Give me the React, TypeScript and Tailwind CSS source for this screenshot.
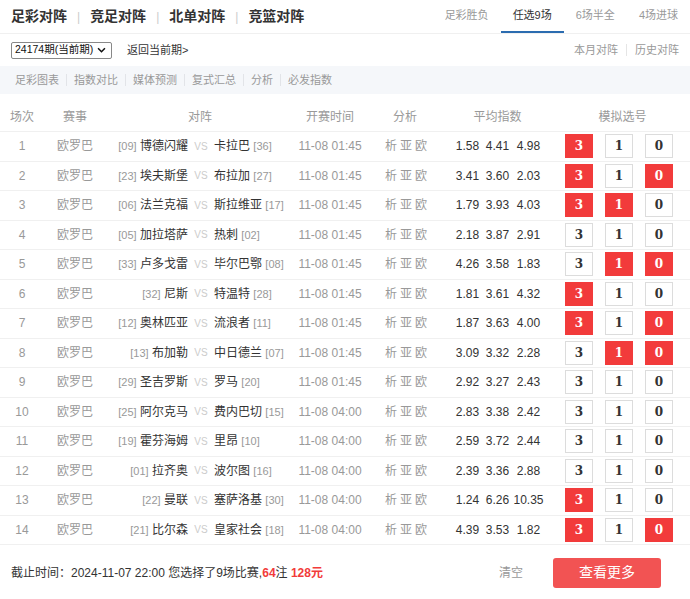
import { Fragment } from 'react';

interface Match {
  no: number;
  league: string;
  homeRank: string;
  home: string;
  away: string;
  awayRank: string;
  time: string;
  odds: [string, string, string];
  picks: [boolean, boolean, boolean];
}

const matches: Match[] = [
  { no: 1, league: '欧罗巴', homeRank: '09', home: '博德闪耀', away: '卡拉巴', awayRank: '36', time: '11-08 01:45', odds: ['1.58', '4.41', '4.98'], picks: [true, false, false] },
  { no: 2, league: '欧罗巴', homeRank: '23', home: '埃夫斯堡', away: '布拉加', awayRank: '27', time: '11-08 01:45', odds: ['3.41', '3.60', '2.03'], picks: [true, false, true] },
  { no: 3, league: '欧罗巴', homeRank: '06', home: '法兰克福', away: '斯拉维亚', awayRank: '17', time: '11-08 01:45', odds: ['1.79', '3.93', '4.03'], picks: [true, true, false] },
  { no: 4, league: '欧罗巴', homeRank: '05', home: '加拉塔萨', away: '热刺', awayRank: '02', time: '11-08 01:45', odds: ['2.18', '3.87', '2.91'], picks: [false, false, false] },
  { no: 5, league: '欧罗巴', homeRank: '33', home: '卢多戈雷', away: '毕尔巴鄂', awayRank: '08', time: '11-08 01:45', odds: ['4.26', '3.58', '1.83'], picks: [false, true, true] },
  { no: 6, league: '欧罗巴', homeRank: '32', home: '尼斯', away: '特温特', awayRank: '28', time: '11-08 01:45', odds: ['1.81', '3.61', '4.32'], picks: [true, false, false] },
  { no: 7, league: '欧罗巴', homeRank: '12', home: '奥林匹亚', away: '流浪者', awayRank: '11', time: '11-08 01:45', odds: ['1.87', '3.63', '4.00'], picks: [true, false, true] },
  { no: 8, league: '欧罗巴', homeRank: '13', home: '布加勒', away: '中日德兰', awayRank: '07', time: '11-08 01:45', odds: ['3.09', '3.32', '2.28'], picks: [false, true, true] },
  { no: 9, league: '欧罗巴', homeRank: '29', home: '圣吉罗斯', away: '罗马', awayRank: '20', time: '11-08 01:45', odds: ['2.92', '3.27', '2.43'], picks: [false, false, false] },
  { no: 10, league: '欧罗巴', homeRank: '25', home: '阿尔克马', away: '费内巴切', awayRank: '15', time: '11-08 04:00', odds: ['2.83', '3.38', '2.42'], picks: [false, false, false] },
  { no: 11, league: '欧罗巴', homeRank: '19', home: '霍芬海姆', away: '里昂', awayRank: '10', time: '11-08 04:00', odds: ['2.59', '3.72', '2.44'], picks: [false, false, false] },
  { no: 12, league: '欧罗巴', homeRank: '01', home: '拉齐奥', away: '波尔图', awayRank: '16', time: '11-08 04:00', odds: ['2.39', '3.36', '2.88'], picks: [false, false, false] },
  { no: 13, league: '欧罗巴', homeRank: '22', home: '曼联', away: '塞萨洛基', awayRank: '30', time: '11-08 04:00', odds: ['1.24', '6.26', '10.35'], picks: [true, false, false] },
  { no: 14, league: '欧罗巴', homeRank: '21', home: '比尔森', away: '皇家社会', awayRank: '18', time: '11-08 04:00', odds: ['4.39', '3.53', '1.82'], picks: [true, false, true] },
];

const titleTabs = ['足彩对阵', '竞足对阵', '北单对阵', '竞篮对阵'];
const playTabs = ['足彩胜负', '任选9场', '6场半全', '4场进球'];
const subNav = ['足彩图表', '指数对比', '媒体预测', '复式汇总', '分析', '必发指数'];

function PickBox({ label, on }: { label: string; on: boolean }) {
  return (
    <div
      className={`w-[28px] h-[24px] flex items-center justify-center text-[12px] font-bold ${
        on ? 'bg-[#f23b3b] text-white' : 'bg-white border border-[#dcdcdc] text-[#333]'
      }`}
      style={{ fontFamily: '"DejaVu Serif", "Liberation Serif", serif' }}
    >
      {label}
    </div>
  );
}

export default function App() {
  return (
    <div
      className="w-[690px] h-[599px] bg-white text-[#333] overflow-hidden"
      style={{ fontFamily: '"Liberation Sans", "Noto Sans CJK SC", sans-serif' }}
    >
      {/* Top title bar */}
      <div className="h-[34px] flex items-center justify-between border-b border-[#f0f0f0]">
        <div className="flex items-center pl-[11px] text-[14px] font-bold text-[#333]">
          {titleTabs.map((t, i) => (
            <Fragment key={t}>
              {i > 0 && <span className="mx-[10px] text-[#ccc] font-normal text-[12px]">|</span>}
              <span>{t}</span>
            </Fragment>
          ))}
        </div>
        <div className="flex items-stretch h-full text-[11px]">
          {playTabs.map((t, i) => (
            <div
              key={t}
              className={`flex items-center px-[12px] border-b-2 ${
                i === 1 ? 'text-[#333] border-[#2b6cb0]' : 'text-[#999] border-transparent'
              }`}
            >
              {t}
            </div>
          ))}
        </div>
      </div>

      {/* Period row */}
      <div className="h-[32px] flex items-center justify-between pl-[11px] pr-[11px]">
        <div className="flex items-center">
          <div className="w-[101px] h-[17px] border border-[#888] rounded-[2px] flex items-center justify-between pl-[3px] pr-[5px] text-[10.5px] text-[#111] whitespace-nowrap">
            <span>24174期(当前期)</span>
            <svg width="9" height="6" viewBox="0 0 10 7" className="shrink-0">
              <path d="M1 1.5 L5 5.5 L9 1.5" fill="none" stroke="#111" strokeWidth="1.8" />
            </svg>
          </div>
          <span className="ml-[15px] text-[11px] text-[#333]">返回当前期&gt;</span>
        </div>
        <div className="flex items-center text-[11px] text-[#999]">
          <span>本月对阵</span>
          <span className="mx-[8px] w-px h-[12px] bg-[#e5e5e5]" />
          <span>历史对阵</span>
        </div>
      </div>

      {/* Sub nav */}
      <div className="h-[28px] bg-[#f5f7fa] flex items-center pl-[15px] text-[11px] text-[#999]">
        {subNav.map((t, i) => (
          <Fragment key={t}>
            {i > 0 && <span className="mx-[7px] w-px h-[12px] bg-[#e2e4e8]" />}
            <span>{t}</span>
          </Fragment>
        ))}
      </div>

      {/* Table */}
      <div className="mt-[8px]">
        <div className="h-[30px] flex items-center text-[12px] text-[#999] border-b border-[#f0f0f0]">
          <div className="w-[44px] text-center">场次</div>
          <div className="w-[62px] text-center">赛事</div>
          <div className="w-[184px] text-center pl-[4px]">对阵</div>
          <div className="w-[80px] text-center">开赛时间</div>
          <div className="w-[70px] text-center">分析</div>
          <div className="w-[115px] text-center">平均指数</div>
          <div className="w-[130px] text-center pl-[5px]">模拟选号</div>
        </div>
        {matches.map((m) => (
          <div key={m.no} className="h-[29.5px] flex items-center text-[12px] border-b border-[#f0f0f0]">
            <div className="w-[44px] text-center text-[#999]">{m.no}</div>
            <div className="w-[62px] text-center text-[#999]">{m.league}</div>
            <div className="w-[184px] flex items-center">
              <div className="w-[82px] text-right whitespace-nowrap">
                <span className="text-[11px] text-[#999]">[{m.homeRank}]</span> <span className="text-[#333]">{m.home}</span>
              </div>
              <div className="w-[26px] text-center text-[10px] text-[#ccc]">VS</div>
              <div className="flex-1 whitespace-nowrap">
                <span className="text-[#333]">{m.away}</span> <span className="text-[11px] text-[#999]">[{m.awayRank}]</span>
              </div>
            </div>
            <div className="w-[80px] text-center text-[#999]">{m.time}</div>
            <div className="w-[70px] text-center text-[#999] tracking-[3px] pl-[5px]">析亚欧</div>
            <div className="w-[115px] flex items-center justify-center text-[#333] pl-[2px]">
              <span className="w-[30px] text-center">{m.odds[0]}</span>
              <span className="w-[30px] text-center">{m.odds[1]}</span>
              <span className="w-[32px] text-center">{m.odds[2]}</span>
            </div>
            <div className="flex items-center gap-[12px] pl-[10px]">
              <PickBox label="3" on={m.picks[0]} />
              <PickBox label="1" on={m.picks[1]} />
              <PickBox label="0" on={m.picks[2]} />
            </div>
          </div>
        ))}
      </div>

      {/* Footer */}
      <div className="h-[56px] flex items-center justify-between pl-[11px] pr-[29px] border-b border-[#f0f0f0]">
        <div className="text-[12px] text-[#333]">
          截止时间：2024-11-07 22:00 您选择了9场比赛,
          <span className="text-[#f23b3b] font-bold">64</span>注{' '}
          <span className="text-[#f23b3b] font-bold">128元</span>
        </div>
        <div className="flex items-center">
          <span className="text-[12px] text-[#999] mr-[30px]">清空</span>
          <div className="w-[108px] h-[30px] rounded-[3px] bg-[#f25353] text-white text-[14px] flex items-center justify-center">
            查看更多
          </div>
        </div>
      </div>
    </div>
  );
}
